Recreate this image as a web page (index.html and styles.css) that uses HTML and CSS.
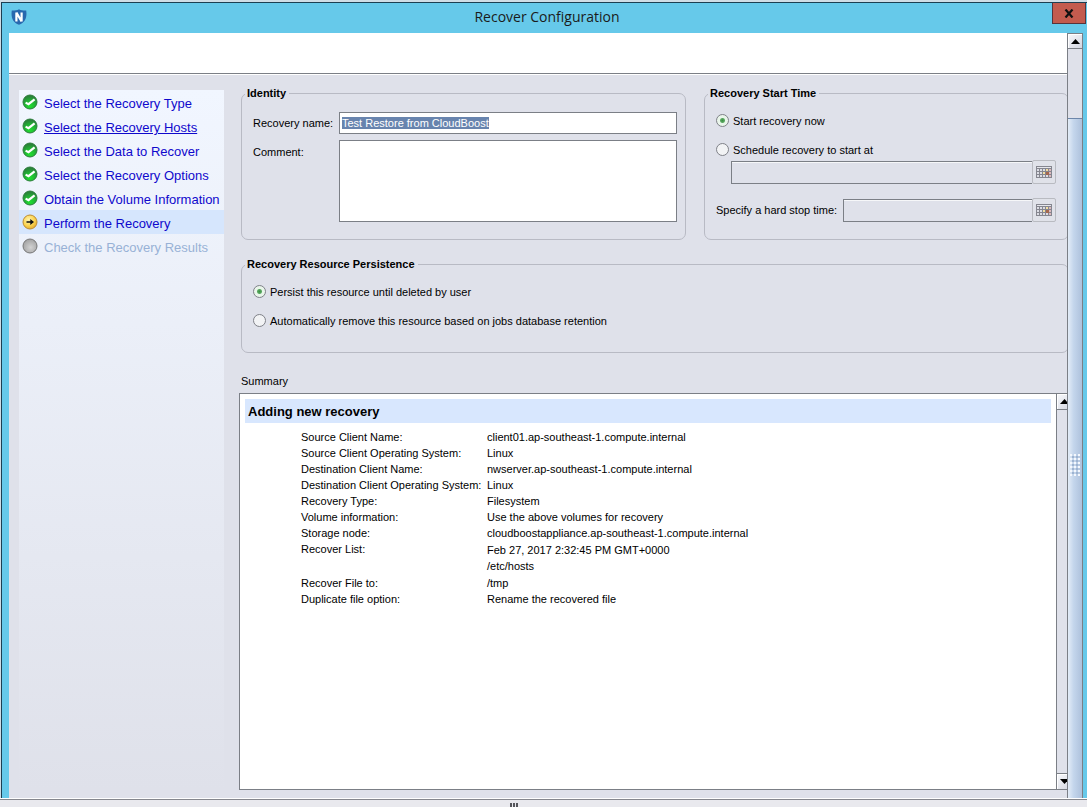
FILE: index.html
```html
<!DOCTYPE html>
<html lang="en">
<head>
  <meta charset="UTF-8" />
  <meta name="viewport" content="width=device-width, initial-scale=1.0" />
  <title>Recover Configuration</title>
  <link rel="stylesheet" href="styles.css">
</head>
<body>
  <!-- shared icons -->
  <svg class="defs" width="0" height="0" aria-hidden="true">
    <defs>
      <radialGradient id="green" cx="50%" cy="80%" r="75%">
        <stop offset="0" stop-color="#1fe02f" />
        <stop offset="0.6" stop-color="#22ab35" />
        <stop offset="1" stop-color="#2b7c3a" />
      </radialGradient>
      <radialGradient id="yellow" cx="40%" cy="35%" r="70%">
        <stop offset="0" stop-color="#fff4b0" />
        <stop offset="0.6" stop-color="#fbd34e" />
        <stop offset="1" stop-color="#e0a62c" />
      </radialGradient>
      <radialGradient id="grey" cx="55%" cy="60%" r="60%">
        <stop offset="0" stop-color="#d2d2d2" />
        <stop offset="1" stop-color="#a2a2a2" />
      </radialGradient>
      <symbol id="done" viewBox="0 0 16 16">
        <circle cx="8" cy="8" r="7" fill="url(#green)" stroke="#2c7d3b" />
        <path d="M3.600 8.600l2.900 1.600L12.600 5.400" fill="none" stroke="#fff" stroke-width="2.2" />
      </symbol>
      <symbol id="current" viewBox="0 0 16 16">
        <circle cx="8" cy="8" r="7" fill="url(#yellow)" stroke="#bd8d35" />
        <path d="M4.5 7.2h3.8V5L12 8l-3.700 3V8.800H4.500z" fill="#111" />
      </symbol>
      <symbol id="pending" viewBox="0 0 16 16">
        <circle cx="8" cy="8" r="7" fill="url(#grey)" stroke="#777" />
      </symbol>
      <symbol id="calendar" viewBox="0 0 16 12">
        <rect x="0" y="0" width="16" height="12" fill="#85868f" />
        <path d="M1 1h14v1H1z" fill="#e6e7ec" />
        <path d="M1 3h2v2H1zM4 3h2v2H4zM7 3h2v2H7zM1 6h2v2H1zM4 6h2v2H4zM1 9h2v2H1zM4 9h2v2H4zM7 9h2v2H7zM10 9h2v2h-2z" fill="#dcdde4" />
        <path d="M10 3h2v2h-2zM7 6h2v2H7z" fill="#f3dfa0" />
        <path d="M13 3h2v2h-2zM13 6h2v2h-2zM13 9h2v2h-2z" fill="#dcb9bd" />
        <path d="M10 6h3v3h-3z" fill="#a5684f" />
      </symbol>
    </defs>
  </svg>

  <div class="window">
    <header class="titlebar">
      <svg class="logo" width="16" height="16" viewBox="0 0 16 16">
        <path d="M8 .2C6 1.400 3.500 1.700 .8 1.600C-.2 8 1.500 13.500 8 15.800C14.500 13.500 16.200 8 15.200 1.600C12.500 1.700 10 1.400 8 .2z" fill="#2868ae" />
        <path d="M5.400 12.500V3.500M10.600 12.500V3.500M5.400 3.500L10.600 12.500" fill="none" stroke="#fff" stroke-width="2.200" />
      </svg>
      <h1>Recover Configuration</h1>
      <button class="close" type="button" aria-label="Close">
        <svg width="10" height="9" viewBox="0 0 10 9"><path d="M1.500 .5l7 8M8.500 .5l-7 8" stroke="#111" stroke-width="2.200" /></svg>
      </button>
    </header>

    <div class="client">
      <div class="page">
        <div class="banner"></div>
        <div class="content">
          <nav class="steps">
            <a href="#"><svg><use href="#done" /></svg>Select the Recovery Type</a>
            <a href="#" class="hover"><svg><use href="#done" /></svg><span>Select the Recovery Hosts</span></a>
            <a href="#"><svg><use href="#done" /></svg>Select the Data to Recover</a>
            <a href="#"><svg><use href="#done" /></svg>Select the Recovery Options</a>
            <a href="#"><svg><use href="#done" /></svg>Obtain the Volume Information</a>
            <a href="#" class="active"><svg><use href="#current" /></svg>Perform the Recovery</a>
            <a href="#" class="disabled"><svg><use href="#pending" /></svg>Check the Recovery Results</a>
          </nav>

          <form class="form">
            <div class="groups">
              <fieldset class="identity">
                <legend>Identity</legend>
                <label for="name">Recovery name:</label>
                <input type="text" id="name" value="Test Restore from CloudBoost" />
                <label class="top" for="comment">Comment:</label>
                <textarea id="comment"></textarea>
              </fieldset>

              <fieldset class="start">
                <legend>Recovery Start Time</legend>
                <label class="option"><input type="radio" name="start" checked />Start recovery now</label>
                <label class="option"><input type="radio" name="start" id="later" />Schedule recovery to start at</label>
                <div class="date indent">
                  <input type="text" aria-label="Start time" disabled />
                  <button type="button" aria-label="Pick start time"><svg width="16" height="12"><use href="#calendar" /></svg></button>
                </div>
                <div class="date">
                  <label for="stop">Specify a hard stop time:</label>
                  <input type="text" id="stop" disabled />
                  <button type="button" aria-label="Pick stop time"><svg width="16" height="12"><use href="#calendar" /></svg></button>
                </div>
              </fieldset>
            </div>

            <fieldset class="persistence">
              <legend>Recovery Resource Persistence</legend>
              <label class="option"><input type="radio" name="persist" checked />Persist this resource until deleted by user</label>
              <label class="option"><input type="radio" name="persist" />Automatically remove this resource based on jobs database retention</label>
            </fieldset>

            <p class="caption">Summary</p>
            <div class="summary">
              <div class="report">
                <h2>Adding new recovery</h2>
                <table>
                  <tr><th>Source Client Name:</th><td>client01.ap-southeast-1.compute.internal</td></tr>
                  <tr><th>Source Client Operating System:</th><td>Linux</td></tr>
                  <tr><th>Destination Client Name:</th><td>nwserver.ap-southeast-1.compute.internal</td></tr>
                  <tr><th>Destination Client Operating System:</th><td>Linux</td></tr>
                  <tr><th>Recovery Type:</th><td>Filesystem</td></tr>
                  <tr><th>Volume information:</th><td>Use the above volumes for recovery</td></tr>
                  <tr><th>Storage node:</th><td>cloudboostappliance.ap-southeast-1.compute.internal</td></tr>
                  <tr class="list"><th>Recover List:</th><td>Feb 27, 2017 2:32:45 PM GMT+0000<br>/etc/hosts</td></tr>
                  <tr><th>Recover File to:</th><td>/tmp</td></tr>
                  <tr><th>Duplicate file option:</th><td>Rename the recovered file</td></tr>
                </table>
              </div>
              <div class="scrollbar inner">
                <span class="arrow"><svg width="9" height="5"><path d="M0 5h9L4.500 0z" /></svg></span>
                <span class="track"></span>
                <span class="arrow"><svg width="9" height="5"><path d="M0 0h9L4.500 5z" /></svg></span>
              </div>
            </div>
          </form>
        </div>
      </div>

      <div class="scrollbar">
        <span class="arrow"><svg width="9" height="5"><path d="M0 5h9L4.500 0z" /></svg></span>
        <span class="track"></span>
        <span class="thumb"><i class="grip"></i></span>
      </div>
    </div>
  </div>

  <footer class="splitter"><i></i><i></i><i></i></footer>

  <script>
    document.getElementById('name').select();
  </script>
</body>
</html>
```

FILE: styles.css
```css
* {
  box-sizing: border-box;
}
body {
  margin: 0;
  height: 100vh;
  display: flex;
  flex-direction: column;
  overflow: hidden;
  padding: 2px 0 0 1px;
  background: #cfdde6;
  font-family: "Liberation Sans", Arial, sans-serif;
  font-size: 11px;
  line-height: 16px;
  color: #000;
}
.defs {
  position: absolute;
}
.window {
  flex: 1;
  min-height: 0;
  display: flex;
  flex-direction: column;
  border-top: 1px solid #1c3f52;
  border-left: 1px solid #1c3f52;
  background: #66c9ea;
  padding: 0 4px 0 7px;
}

/* title bar */
.titlebar {
  display: flex;
  align-items: center;
  height: 30px;
  margin-right: -3px;
}
.logo {
  margin: 0 0 2px 2px;
}
h1 {
  flex: 1;
  margin: 0;
  padding: 0 0 2px 15px;
  text-align: center;
  font-family: "Open Sans", "Segoe UI", sans-serif;
  font-size: 14px;
  font-weight: 400;
  color: #1b1b1b;
}
.close {
  align-self: flex-start;
  width: 34px;
  height: 21px;
  padding: 0;
  border: 1px solid #59333a;
  border-top: 0;
  background: #c35b4e;
  line-height: 0;
}

.client {
  flex: 1;
  min-height: 0;
  display: flex;
  background: #dfe1ea;
}
.page {
  flex: 1;
  min-width: 0;
  display: flex;
  flex-direction: column;
  overflow: hidden;
}
.banner {
  height: 41px;
  flex: none;
  background: #fff;
  border-bottom: 1px solid #7b7f86;
}
.content {
  flex: 1;
  min-height: 0;
  display: flex;
  gap: 15px;
  padding: 11px 0 8px 10px;
  border-top: 1px solid #fff;
}

/* wizard steps */
.steps {
  flex: none;
  width: 205px;
  margin-top: 4px;
  background: linear-gradient(#f1f6ff, #dfe1ea);
}
.steps a {
  display: flex;
  align-items: center;
  gap: 6px;
  height: 24px;
  padding: 4px 0 0 3px;
  font-size: 13px;
  color: #0f08cc;
  text-decoration: none;
  white-space: nowrap;
}
.steps svg {
  width: 16px;
  height: 16px;
  margin-bottom: 4px;
}
.steps .hover {
  text-decoration: underline;
}
.steps .active {
  background: #d6e6fd;
}
.steps .disabled {
  color: #98b1d6;
}

/* form */
.form {
  flex: 1;
  min-width: 0;
  display: flex;
  flex-direction: column;
  margin-right: -2px;
}
.groups {
  display: grid;
  grid-template-columns: 445fr 365fr;
  gap: 18px;
  padding-left: 2px;
}
fieldset {
  min-width: 0;
  margin: 0;
  border: 1px solid #b8bac4;
  border-radius: 7px;
}
legend {
  margin-left: -8px;
  padding: 0 3px 0 2px;
  font-weight: 700;
  line-height: 14px;
}
.identity {
  display: grid;
  grid-template-columns: 86px 1fr;
  row-gap: 6px;
  align-items: center;
  padding: 12px 8px 17px 11px;
}
.identity input,
.identity textarea {
  width: 100%;
  margin: 0;
  border: 1px solid #7b7f86;
  border-radius: 0;
  background: #fff;
  font: inherit;
  outline: 0;
  resize: none;
}
.identity input {
  height: 22px;
  padding: 0 2px;
  line-height: 16px;
}
.identity input::selection {
  background: #6884ae;
  color: #fff;
}
.identity textarea {
  display: block;
  height: 82px;
}
.identity .top {
  align-self: start;
  padding-top: 4px;
}
.option {
  display: flex;
  align-items: center;
  gap: 4px;
  height: 16px;
}
input[type="radio"] {
  appearance: none;
  width: 13px;
  height: 13px;
  margin: 0 0 1px;
  border: 1px solid #7f8188;
  border-radius: 50%;
  background: #f2f3f5;
}
input[type="radio"]:checked {
  background: radial-gradient(circle, #3b8f43 0, #5aa861 2px, #e9f5ea 3px);
}
.start {
  padding: 13px 12px 17px 11px;
}
.start .option + .option {
  margin-top: 13px;
}
.date {
  display: flex;
  align-items: center;
  margin-top: 14px;
  height: 24px;
}
.date.indent {
  margin: 2px 0 0 15px;
}
.date label {
  width: 127px;
}
.date input {
  flex: 1;
  min-width: 0;
  height: 23px;
  border: 1px solid #7b7f86;
  box-shadow: inset 0 1px #f6f7f9;
  background: #dfe1ea;
  border-right: 0;
}
.date button {
  width: 24px;
  height: 24px;
  padding: 0;
  border: 1px solid #b9bbc1;
  border-radius: 2px;
  background: #e0e2e9;
  line-height: 0;
}
.persistence {
  margin: 17px 0 0 2px;
  padding: 13px 11px 23px;
}
.persistence .option + .option {
  margin-top: 13px;
}
.caption {
  margin: 20px 0 4px 2px;
}

/* summary report */
.summary {
  flex: 1;
  min-height: 0;
  display: flex;
  margin-right: -4px;
  border: 1px solid #7b7f86;
  background: #fff;
}
.report {
  flex: 1;
  padding: 5px;
}
h2 {
  margin: 0 0 6px;
  padding: 1px 0 0 3px;
  background: #d8e7fe;
  font-size: 13px;
  line-height: 23px;
}
table {
  margin-left: 56px;
  border-spacing: 0;
}
th,
td {
  padding: 0;
  font-weight: 400;
  text-align: left;
  vertical-align: top;
}
th {
  width: 186px;
}
.list td {
  padding: 1px 0;
}

/* scroll bars */
.scrollbar {
  flex: none;
  width: 16px;
  display: flex;
  flex-direction: column;
  border: 1px solid #7b7f86;
  border-bottom: 0;
  background: #dfe1ea;
}
.scrollbar.inner {
  border-width: 0 0 0 1px;
}
.arrow {
  display: flex;
  align-items: center;
  justify-content: center;
  height: 15px;
  border: 1px solid #7b7f86;
  border-width: 0 0 1px;
  box-shadow: inset 1px 1px #fff;
  background: linear-gradient(135deg, #f8f9fc, #d2d5e0);
}
.inner .arrow {
  height: 16px;
}
.track {
  height: 69px;
}
.inner .track {
  flex: 1;
  height: auto;
}
.inner .track + .arrow {
  border-width: 1px 0 0;
}
.thumb {
  flex: 1;
  display: flex;
  align-items: center;
  justify-content: center;
  padding-top: 12px;
  border-top: 1px solid #6d86aa;
  background: linear-gradient(90deg, #e3ecf7, #c4d6ec 40%, #adc1dc);
}
.grip {
  width: 10px;
  height: 22px;
  background-image: radial-gradient(circle at 1px 1px, #f4f8fd 1px, transparent 1px), radial-gradient(circle at 3px 3px, #9db3d0 1px, transparent 1px);
  background-size: 4px 4px;
}

/* bottom splitter */
.splitter {
  flex: none;
  height: 9px;
  display: flex;
  justify-content: center;
  gap: 1px;
  margin-left: -1px;
  padding: 4px 60px 0 0;
  border-top: 1px solid #fff;
  background: #e9e9ee;
  box-shadow: inset 0 1px #85878d;
}
.splitter i {
  width: 2px;
  height: 4px;
  background: #55565b;
}
```
